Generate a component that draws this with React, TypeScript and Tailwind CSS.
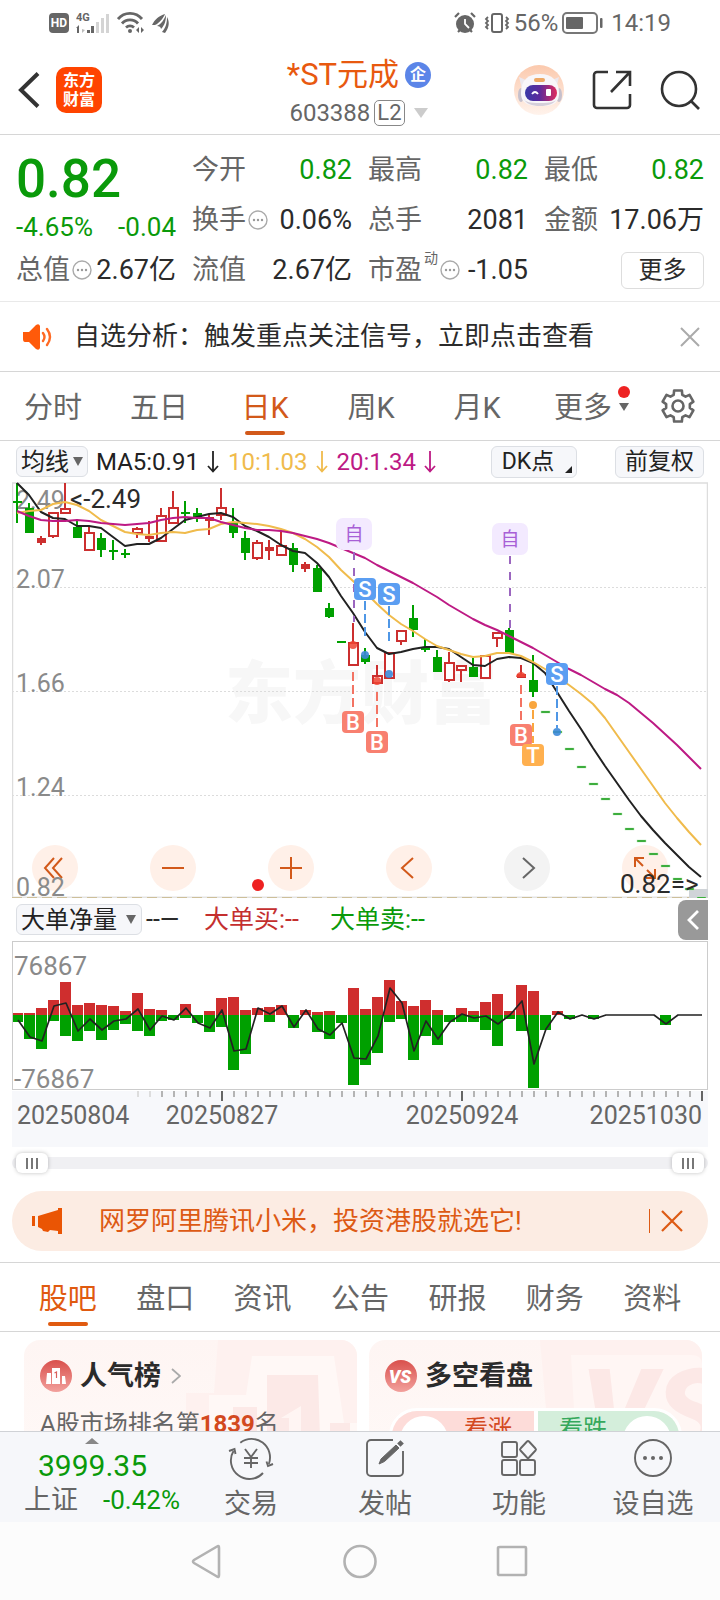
import React from "react";

type Kind = "g" | "r" | "h";
// kind, body top, body bottom, high, low
type Candle = [Kind, number, number, number, number];

const candles: Candle[] = [
  ["g", 501, 503, 483, 523], ["g", 508, 533, 503, 533], ["r", 538, 543, 536, 545], ["h", 512, 536, 512, 538],
  ["h", 508, 513, 483, 513], ["g", 527, 538, 520, 538], ["h", 532, 550, 527, 550], ["g", 538, 550, 533, 557],
  ["g", 550, 552, 540, 560], ["g", 553, 555, 549, 558], ["h", 528, 533, 527, 538], ["r", 536, 539, 521, 542],
  ["h", 515, 541, 508, 542], ["h", 507, 523, 491, 524], ["g", 512, 514, 501, 523], ["g", 513, 517, 508, 522],
  ["r", 517, 521, 515, 535], ["h", 507, 515, 488, 520], ["g", 522, 533, 508, 538], ["g", 538, 553, 531, 560],
  ["h", 542, 558, 540, 560], ["r", 547, 551, 540, 560], ["h", 545, 555, 531, 555], ["g", 548, 565, 543, 572],
  ["r", 564, 569, 562, 572], ["g", 568, 592, 565, 592], ["g", 608, 617, 603, 618], ["g", 641, 643, 642, 642],
  ["h", 642, 665, 623, 665], ["g", 655, 662, 648, 664], ["h", 675, 683, 665, 684], ["h", 652, 678, 652, 679],
  ["h", 630, 641, 630, 645], ["g", 618, 630, 605, 637], ["g", 648, 650, 639, 652], ["g", 657, 672, 650, 672],
  ["h", 662, 680, 652, 682], ["h", 665, 670, 665, 682], ["g", 667, 677, 658, 677], ["h", 655, 678, 655, 678],
  ["h", 632, 638, 632, 647], ["g", 630, 654, 628, 654], ["r", 674, 678, 665, 678], ["g", 680, 692, 655, 697],
];

const limitDown = [712, 732, 749, 767, 784, 799, 814, 829, 841, 854, 866, 879, 889, 898];

const ma5 = [
  483, 495, 512, 518, 519, 526, 526, 528, 537, 546, 544, 544, 538, 529, 520, 517, 514, 513, 517, 526, 531, 537, 545,
  551, 553, 563, 577, 596, 613, 632, 648, 654, 652, 649, 647, 647, 649, 657, 665, 666, 659, 657, 658, 663, 673, 692,
  711, 729, 748, 766, 783, 800, 816, 830, 843, 855, 867, 877,
];
const ma10 = [
  513, 511, 510, 504, 502, 505, 511, 520, 526, 532, 534, 535, 533, 532, 533, 530, 529, 524, 522, 523, 524, 526, 529,
  533, 539, 547, 557, 570, 581, 592, 604, 615, 624, 631, 639, 646, 650, 654, 657, 656, 653, 653, 656, 662, 669, 677,
  685, 694, 704, 718, 735, 752, 769, 786, 803, 818, 832, 845,
];
const ma20 = [
  511, 516, 520, 521, 521, 520, 521, 523, 524, 525, 524, 523, 520, 518, 517, 518, 518, 522, 525, 528, 530, 530, 531,
  533, 536, 539, 543, 548, 553, 558, 565, 571, 577, 583, 590, 597, 605, 612, 619, 625, 630, 636, 642, 648, 655, 662,
  669, 675, 682, 689, 695, 703, 713, 723, 734, 745, 757, 769,
];

const buys = [
  2, 2, 7, 15, 33, 10, 12, 10, 9, 4, 22, 6, 5, 0, 11, 0, 4, 17, 18, 5, 7, 8, 10, 0, 5, 3, 4, 0, 27, 6, 18, 35, 14, 9,
  15, 5, 0, 7, 4, 13, 21, 4, 30, 24, 0, 4, 0, 0, 0,
];
const sells = [
  7, 24, 34, 6, 21, 26, 16, 25, 15, 9, 16, 21, 6, 5, 3, 8, 17, 12, 55, 39, 0, 7, 0, 13, 0, 17, 24, 8, 70, 50, 38, 7, 4,
  45, 21, 30, 7, 7, 7, 15, 31, 4, 16, 73, 15, 0, 4, 0, 4, 0, 0, 0, 0, 0, 10,
];
const net = [
  1020, 1037, 1041, 1006, 1003, 1031, 1019, 1030, 1021, 1019, 1009, 1030, 1016, 1020, 1008, 1023, 1028, 1010, 1051,
  1049, 1008, 1014, 1006, 1027, 1010, 1029, 1035, 1023, 1058, 1059, 1036, 988, 1003, 1051, 1021, 1039, 1022, 1014,
  1018, 1016, 1024, 1015, 1001, 1064, 1029, 1012, 1019, 1015, 1019, 1015, 1015, 1015, 1015, 1015, 1024, 1015, 1015,
  1015,
];

const cx = (i: number) => 17 + 12 * i;
const line = (ys: number[]) => ys.map((y, i) => `${cx(i)},${y}`).join(" ");

const gearPath = (() => {
  const pts: string[] = [];
  for (let k = 0; k < 6; k++) {
    const a = k * 60 - 90;
    for (const [d, r] of [[-21, 12], [-14, 16], [14, 16], [21, 12]]) {
      const t = ((a + d) * Math.PI) / 180;
      pts.push(`${(18 + r * Math.cos(t)).toFixed(2)},${(18 + r * Math.sin(t)).toFixed(2)}`);
    }
  }
  return `M${pts.join("L")}Z`;
})();

function StatusBar() {
  return (
    <div className="flex h-[45px] shrink-0 items-center justify-between px-[49px] text-2xl text-[#666]">
      <div className="flex items-center gap-[7px]">
        <span className="flex h-5 w-5 items-center justify-center rounded bg-[#666] text-xs font-bold text-white">HD</span>
        <svg className="h-6 w-[34px]" viewBox="0 0 34 24" fill="#666">
          <text x="0" y="10" fontSize="11" fontWeight="700">4G</text>
          <path d="M0 17l3-3v8h-2v-5z" />
          <path d="M6 14v8l3-3-3-1z" fill="#bbb" />
          <rect x="11" y="19" width="3" height="3" />
          <rect x="15" y="15" width="3" height="7" />
          <g fill="#d4d4d4">
            <rect x="20" y="11" width="3" height="11" />
            <rect x="25" y="7" width="3" height="15" />
            <rect x="30" y="3" width="3" height="19" />
          </g>
        </svg>
        <svg className="h-6 w-7" viewBox="0 0 28 24" fill="none" stroke="#666" strokeWidth="2.8">
          <path d="M1 8a15.500 15.500 0 0 1 24 0M5 12.500a10.500 10.500 0 0 1 16 0M9 16.500a6 6 0 0 1 8 0" />
          <circle cx="13" cy="20" r="2" fill="#666" stroke="none" />
          <path d="M22 16v6l-3-3zM24 16v6l3-3z" fill="#666" stroke="none" />
        </svg>
        <svg className="h-5 w-[18px]" viewBox="0 0 18 20" fill="#666">
          <path d="M0 12C3 6 7 3 13 1c-1 3-5 8-8 10-1 1-3 1-5 1zM5 13c4-2 7-6 9-11 0 5-1 10-5 14 0-2-2-3-4-3zM10 19c4-5 5-9 5-15 3 5 2 11-2 16z" />
        </svg>
      </div>
      <div className="flex items-center gap-2">
        <svg className="h-[22px] w-[22px]" viewBox="0 0 22 22">
          <circle cx="11" cy="12" r="9" fill="#666" />
          <path d="M1 5l4-4M21 5l-4-4M4 20l2-2M18 20l-2-2" stroke="#666" strokeWidth="2.200" />
          <path d="M11 7v5l4 4" stroke="#fff" strokeWidth="1.800" fill="none" />
        </svg>
        <svg className="h-[22px] w-[26px]" viewBox="0 0 26 22" fill="none" stroke="#666" strokeWidth="2">
          <rect x="8" y="2" width="10" height="18" rx="2" />
          <path d="M4 5l-2 2 2 2-2 2 2 2-2 2 2 2M22 5l2 2-2 2 2 2-2 2 2 2-2 2" strokeWidth="1.800" />
        </svg>
        <span className="-ml-1">56%</span>
        <svg className="h-[22px] w-[41px] -ml-1" viewBox="0 0 41 22">
          <rect x="1" y="1" width="34" height="20" rx="4" fill="none" stroke="#777" strokeWidth="2" />
          <rect x="4" y="5" width="17" height="12" rx="1" fill="#666" />
          <rect x="38" y="6" width="2.500" height="10" rx="1" fill="#666" />
        </svg>
        <span>14:19</span>
      </div>
    </div>
  );
}

function Header() {
  return (
    <header className="grid h-[90px] shrink-0 grid-cols-[1fr_auto_1fr] items-center border-b border-[#d6d6d6] pr-5 pl-[18px]">
      <div className="flex items-center gap-4">
        <button aria-label="返回">
          <svg className="h-9 w-[22px]" viewBox="0 0 22 36" fill="none" stroke="#333" strokeWidth="4">
            <path d="M20 1.500L3 18l17 16.500" />
          </svg>
        </button>
        <a href="#home" className="flex h-[46px] w-[46px] flex-col items-center justify-center rounded-[10px] bg-[#ff4400] text-base leading-[19px] font-bold text-white">
          <span>东方</span>
          <span>财富</span>
        </a>
      </div>
      <div className="flex flex-col items-center pt-[6px]">
        <div className="flex items-center gap-[6px]">
          <h1 className="text-[31px] leading-10 text-[#e8590f]">*ST元成</h1>
          <span className="flex h-[26px] w-[26px] items-center justify-center rounded-full bg-[#5b85e8] text-base leading-none font-bold text-white">企</span>
        </div>
        <button className="flex items-center gap-1 text-2xl leading-9 text-[#666]">
          <span>603388</span>
          <span className="flex h-[26px] items-center rounded-[5px] border border-[#888] px-[2px] text-[22px]">L2</span>
          <svg className="ml-1 h-[10px] w-4" viewBox="0 0 16 10"><path d="M1 0h14L8 10z" fill="#ccc" /></svg>
        </button>
      </div>
      <div className="flex items-center justify-end gap-7">
        <button aria-label="智能助手">
          <svg className="h-[50px] w-[50px]" viewBox="0 0 50 50">
            <defs>
              <linearGradient id="peach" x1="0" y1="0" x2="0" y2="1">
                <stop offset="0" stopColor="#fbc9ad" /><stop offset="1" stopColor="#fff3ec" />
              </linearGradient>
              <linearGradient id="visor">
                <stop offset="0" stopColor="#3a3aa8" /><stop offset=".45" stopColor="#5b2a9c" /><stop offset="1" stopColor="#e02a5c" />
              </linearGradient>
            </defs>
            <circle cx="25" cy="25" r="25" fill="url(#peach)" />
            <path d="M5 12l9 4-6 8zM45 12l-9 4 6 8z" fill="#ece8ee" />
            <ellipse cx="7" cy="30" rx="3" ry="7" fill="#c6c0cc" />
            <ellipse cx="45" cy="30" rx="3" ry="7" fill="#c6c0cc" />
            <path d="M7 28C7 15 14 9 26 9s19 7 19 19-8 13-19 13S7 39 7 28z" fill="#f8f6f9" />
            <path d="M9 33c3 6 9 8 17 8s14-2 18-8c-2 4-7 5-18 5s-15-1-17-5z" fill="#d5cfda" />
            <rect x="20" y="13" width="11" height="4" rx="2" fill="#eda764" />
            <rect x="11" y="20" width="32" height="16" rx="8" fill="url(#visor)" />
            <path d="M18 29q3-4 6 0" stroke="#fff" strokeWidth="1.800" fill="none" />
            <rect x="32" y="24" width="5" height="7" rx="1" fill="#fff" />
          </svg>
        </button>
        <button aria-label="分享">
          <svg className="h-10 w-10" viewBox="0 0 40 40" fill="none" stroke="#333" strokeWidth="2.600">
            <path d="M16 2H5a3 3 0 0 0-3 3v30a3 3 0 0 0 3 3h30a3 3 0 0 0 3-3V24M24 2h14v14M38 2L19 22" />
          </svg>
        </button>
        <button aria-label="搜索">
          <svg className="h-10 w-10" viewBox="0 0 40 40" fill="none" stroke="#333" strokeWidth="2.600">
            <circle cx="19" cy="19" r="17" /><path d="M31 31l8 8" />
          </svg>
        </button>
      </div>
    </header>
  );
}

function Info() {
  return (
    <svg className="ml-[2px] h-5 w-5" viewBox="0 0 20 20">
      <circle cx="10" cy="10" r="9" fill="none" stroke="#aaa" strokeWidth="1.400" />
      <g fill="#999"><circle cx="6" cy="10" r="1.200" /><circle cx="10" cy="10" r="1.200" /><circle cx="14" cy="10" r="1.200" /></g>
    </svg>
  );
}

function Stat({ label, value, green, info, sup }: { label: string; value: string; green?: boolean; info?: boolean; sup?: string }) {
  return (
    <div className="flex h-[50px] items-center justify-between whitespace-nowrap">
      <dt className="flex items-center text-[#666]">
        {label}
        {sup && <sup className="-top-3 ml-[2px] text-sm">{sup}</sup>}
        {info && <Info />}
      </dt>
      <dd className={green ? "text-[#0a9a0a]" : "text-[#2b2b2b]"}>{value}</dd>
    </div>
  );
}

function Quote() {
  return (
    <dl className="grid shrink-0 grid-cols-4 gap-x-4 border-b border-[#e9e9e9] px-4 pt-[10px] pb-[6px] text-[27px] leading-9">
      <div className="row-span-2 flex flex-col text-[#0a9a0a]">
        <span className="pt-1 text-[53px] leading-[60px] font-medium">0.82</span>
        <span className="flex justify-between text-[26px] leading-9"><span>-4.65%</span><span>-0.04</span></span>
      </div>
      <Stat label="今开" value="0.82" green />
      <Stat label="最高" value="0.82" green />
      <Stat label="最低" value="0.82" green />
      <Stat label="换手" value="0.06%" info />
      <Stat label="总手" value="2081" />
      <Stat label="金额" value="17.06万" />
      <Stat label="总值" value="2.67亿" info />
      <Stat label="流值" value="2.67亿" />
      <Stat label="市盈" value="-1.05" info sup="动" />
      <div className="flex items-center justify-end">
        <button className="h-[37px] w-[83px] rounded-md border border-[#ddd] text-2xl leading-8 text-[#2b2b2b]">更多</button>
      </div>
    </dl>
  );
}

function Notice() {
  return (
    <div className="flex h-[70px] shrink-0 items-center border-b border-[#d6d6d6] px-5">
      <svg className="h-[26px] w-8" viewBox="0 0 32 26" fill="#ff5a0a">
        <path d="M3 8h6l7-7q3-2 4 1v22q-1 3-4 1l-7-7H5q-2 0-2-3z" />
        <path d="M23 9q3 4 0 8M27 5q6 8 0 16" fill="none" stroke="#ff6a24" strokeWidth="2.400" strokeLinecap="round" />
      </svg>
      <p className="ml-[22px] flex-1 text-[26px] whitespace-nowrap text-[#2b2b2b]">自选分析：触发重点关注信号，立即点击查看</p>
      <button aria-label="关闭">
        <svg className="h-5 w-5" viewBox="0 0 20 20" stroke="#aaa" strokeWidth="2"><path d="M1 1l18 18M19 1L1 19" /></svg>
      </button>
    </div>
  );
}

function PeriodTabs() {
  return (
    <nav className="grid h-[69px] shrink-0 grid-cols-[repeat(6,106fr)_84fr] border-b border-[#d6d6d6] text-[29px] text-[#666]">
      {["分时", "五日", "日K", "周K", "月K", "更多"].map((t) => (
        <button key={t} className={t === "日K" ? "relative pt-[6px] text-[#d2591a]" : "relative pt-[6px]"}>
          {t}
          {t === "日K" && <span className="absolute bottom-[5px] left-1/2 h-1 w-10 -translate-x-1/2 rounded-full bg-[#d2591a]" />}
          {t === "更多" && (
            <svg className="absolute top-[14px] right-[6px] h-7 w-3" viewBox="0 0 12 28">
              <circle cx="6" cy="6" r="6" fill="#ee2222" />
              <path d="M1 17h10l-5 8z" fill="#666" />
            </svg>
          )}
        </button>
      ))}
      <button aria-label="设置" className="flex items-center justify-center">
        <svg className="h-9 w-9" viewBox="0 0 36 36" fill="none" stroke="#666" strokeWidth="2.600" strokeLinejoin="round">
          <path d={gearPath} /><circle cx="18" cy="18" r="5.500" />
        </svg>
      </button>
    </nav>
  );
}

function Down() {
  return (
    <svg className="mr-[9px] ml-2 h-[22px] w-3" viewBox="0 0 12 22" fill="none" stroke="currentColor" strokeWidth="1.800">
      <path d="M6 0v20M1 15l5 5.500 5-5.500" />
    </svg>
  );
}

function Picker({ label, name, wide }: { label: string; name: string; wide?: boolean }) {
  return (
    <label className={wide ? "relative w-[126px]" : "relative w-[72px]"}>
      <select aria-label={name} className="block h-[31px] w-full appearance-none rounded-md border border-[#dcdfe4] bg-[#f6f7fa] pl-1 text-2xl leading-7 text-[#222]">
        <option>{label}</option>
      </select>
      <svg className={wide ? "absolute top-[11px] right-[6px] h-[9px] w-[10px]" : "absolute top-[11px] right-[5px] h-[9px] w-[10px]"} viewBox="0 0 10 9">
        <path d="M0 0h10L5 9z" fill="#666" />
      </svg>
    </label>
  );
}

function Indicators() {
  return (
    <div className="flex h-[41px] shrink-0 items-center px-4 text-2xl whitespace-nowrap">
      <Picker label="均线" name="主图指标" />
      <span className="ml-2 flex items-center text-[#222]">MA5:0.91<Down /></span>
      <span className="flex items-center text-[#f0bb4c]">10:1.03<Down /></span>
      <span className="flex items-center text-[#bd1a84]">20:1.34<Down /></span>
      <button className="relative ml-auto h-8 w-[86px] rounded-md border border-[#dcdfe4] bg-[#f6f7fa] pr-3 text-[23px] leading-7 text-[#222]">
        DK点
        <svg className="absolute right-1 bottom-1 h-[7px] w-[7px]" viewBox="0 0 7 7"><path d="M7 0v7H0z" fill="#222" /></svg>
      </button>
      <button className="ml-[38px] h-8 w-[89px] rounded-md border border-[#dcdfe4] bg-[#f6f7fa] text-[23px] leading-7 text-[#222]">前复权</button>
    </div>
  );
}

function Tag({ x, y, t, c }: { x: number; y: number; t: string; c: string }) {
  return (
    <g>
      <rect x={x} y={y} width="22" height="22" rx="4" fill={c} />
      <text x={x + 11} y={y + 19} fontSize="22" fontWeight="500" textAnchor="middle" fill="#fff">{t}</text>
    </g>
  );
}

function SelfMark({ x, y }: { x: number; y: number }) {
  return (
    <g>
      <rect x={x} y={y} width="36" height="32" rx="7" fill="#f3eaff" />
      <text x={x + 18} y={y + 23} fontSize="19" textAnchor="middle" fill="#a85fd6">自</text>
    </g>
  );
}

const roundButtons = [
  { name: "最早", d: "M22 13L13 23l9 10M30 13L21 23l9 10" },
  { name: "缩小", d: "M12 23h22" },
  { name: "放大", d: "M12 23h22M23 12v22" },
  { name: "左移", d: "M27 13L16 23l11 10" },
  { name: "右移", d: "M19 13l11 10-11 10", grey: true },
  { name: "全屏", d: "M13 22v-9h9M13 13l8 8M33 24v9h-9M33 33l-8-8" },
];

function PriceChart() {
  return (
    <div className="relative mx-3 shrink-0">
      <div className="absolute inset-x-0 bottom-[7px] flex justify-between pr-10 pl-5">
        {roundButtons.map((b) => (
          <button key={b.name} aria-label={b.name} className={b.grey ? "h-[46px] w-[46px] rounded-full bg-[#f3f3f3] text-[#666]" : "h-[46px] w-[46px] rounded-full bg-[#fff0e8] text-[#d2591a]"}>
            <svg className="h-full w-full" viewBox="0 0 46 46" fill="none" stroke="currentColor" strokeWidth="2"><path d={b.d} /></svg>
          </button>
        ))}
      </div>
      <svg className="pointer-events-none relative block h-auto w-full" viewBox="12 482 696 416" role="img" aria-label="日K线图">
        <text x="225" y="718" fontSize="68" fontWeight="900" fill="#f7f7f7">东方财富</text>
        <g stroke="#dcdcdc" strokeDasharray="2 2">
          <path d="M12 587.500h696M12 691.500h696M12 795.500h696" />
        </g>
        <path d="M12.500 898V483h695V898" fill="none" stroke="#ddd" strokeWidth="1.500" />
        <path d="M12 897.500h696" stroke="#e4e4e4" strokeWidth="2" />
        <path d="M12 897.500h696" stroke="#cdbf9a" strokeDasharray="10 5" />
        <g fontSize="25" fill="#8a8a8a">
          <text x="16" y="509">2.49</text>
          <text x="16" y="588">2.07</text>
          <text x="16" y="692">1.66</text>
          <text x="16" y="796">1.24</text>
          <text x="16" y="896">0.82</text>
        </g>
        {candles.map(([k, top, bottom, high, low], i) => {
          const x = cx(i);
          const c = k === "g" ? "#00a000" : "#cc2f2f";
          return (
            <g key={i}>
              <path d={`M${x} ${high}V${low}`} stroke={c} strokeWidth="2" />
              {k === "h" ? (
                <rect x={x - 4} y={top + 1} width="9" height={bottom - top - 1} fill="#fff" stroke={c} strokeWidth="2" />
              ) : (
                <rect x={x - 4} y={top} width="9" height={bottom - top} fill={c} />
              )}
            </g>
          );
        })}
        <rect x="689" y="889" width="19" height="9" fill="#d0d4d8" />
        {limitDown.map((y, i) => (
          <rect key={y} x={cx(i + 44) - 4} y={y - 1} width="9" height="2" fill="#159a15" stroke="#b9e8b9" strokeWidth=".5" />
        ))}
        <g fill="none" strokeWidth="2" strokeLinejoin="round">
          <polyline points={line(ma5)} stroke="#222" />
          <polyline points={line(ma10)} stroke="#f0bb4c" />
          <polyline points={line(ma20)} stroke="#bd1a84" />
        </g>
        <g strokeWidth="2" strokeDasharray="8 8" stroke="#9b66bf"><path d="M354 552v70M510 556v72" /></g>
        <g strokeWidth="2" strokeDasharray="9 4">
          <path d="M365 601v38M389 606v38M557 686v42" stroke="#4f97e6" />
          <path d="M353 672v38M377 692v38M521 685v38" stroke="#f37363" />
          <path d="M533 710v33" stroke="#f9a63e" />
        </g>
        <g fill="#3c88d8" fillOpacity=".9"><circle cx="365" cy="655" r="4" /><circle cx="389" cy="674" r="4" /><circle cx="557" cy="732" r="4" /></g>
        <g fill="#ee4433" fillOpacity=".85"><circle cx="353" cy="645" r="4" /><circle cx="377" cy="681" r="4" /><path d="M516 677a5 5 0 0 1 10 0z" /></g>
        <circle cx="533" cy="705" r="4" fill="#f9a63e" />
        <SelfMark x={336} y={518} />
        <SelfMark x={492} y={523} />
        <Tag x={354} y={578} t="S" c="#5b9ef2" />
        <Tag x={378} y={583} t="S" c="#5b9ef2" />
        <Tag x={546} y={663} t="S" c="#5b9ef2" />
        <Tag x={342} y={711} t="B" c="#f88070" />
        <Tag x={366} y={731} t="B" c="#f88070" />
        <Tag x={510} y={724} t="B" c="#f88070" />
        <Tag x={522} y={744} t="T" c="#ffb04f" />
        <circle cx="258" cy="885" r="6" fill="#ee2222" />
        <g fontSize="26" fill="#2b2b2b">
          <text x="70" y="508">&lt;-2.49</text>
          <text x="620" y="893">0.82=&gt;</text>
        </g>
      </svg>
    </div>
  );
}

function VolumeChart() {
  return (
    <>
      <div className="flex h-[43px] shrink-0 items-center pr-3 pl-4 text-[25px] whitespace-nowrap">
        <Picker label="大单净量" name="副图指标" wide />
        <span className="ml-1 w-[50px] text-[#2b2b2b]">--—</span>
        <span className="ml-2 w-[126px] text-[#c42f2f]">大单买:--</span>
        <span className="text-[#0a9a0a]">大单卖:--</span>
        <button aria-label="展开" className="ml-auto flex h-10 w-[30px] items-center justify-center rounded-l-lg bg-[#999]">
          <svg className="h-5 w-3" viewBox="0 0 12 20" fill="none" stroke="#fff" strokeWidth="2.800"><path d="M11 1L2 10l9 9" /></svg>
        </button>
      </div>
      <svg className="mx-3 block h-auto w-[calc(100%-24px)] shrink-0" viewBox="12 941 696 206" role="img" aria-label="大单净量图">
        <g fontSize="26" fill="#8a8a8a">
          <text x="14" y="975">76867</text>
          <text x="14" y="1088">-76867</text>
        </g>
        {buys.map((h, i) => <rect key={i} x={12 + 12 * i} y={1015 - h} width="11" height={h} fill="#cf2e2e" />)}
        {sells.map((h, i) => <rect key={i} x={12 + 12 * i} y={1015} width="11" height={h} fill="#00a000" />)}
        <polyline points={net.map((y, i) => `${18 + 12 * i},${y}`).join(" ")} fill="none" stroke="#222" strokeWidth="1.700" strokeLinejoin="round" />
        <rect x="12.500" y="941.500" width="695" height="148" fill="none" stroke="#ccc" />
        <rect x="12" y="1091" width="696" height="56" fill="#f7f8fb" />
        {Array.from({ length: 48 }, (_, i) => {
          const major = i === 7 || i === 27 || i === 47;
          return <rect key={i} x={137 + 12 * i} y="1091" width="2" height={major ? 10 : 6} fill={major ? "#666" : i < 2 ? "#ddd" : "#b4b4b4"} />;
        })}
        <g fontSize="25" fill="#666">
          <text x="17" y="1124">20250804</text>
          <text x="222" y="1124" textAnchor="middle">20250827</text>
          <text x="462" y="1124" textAnchor="middle">20250924</text>
          <text x="702" y="1124" textAnchor="end">20251030</text>
        </g>
      </svg>
    </>
  );
}

const rangeClass =
  "pointer-events-none absolute inset-x-1 top-0 h-8 w-[calc(100%-8px)] appearance-none bg-transparent [&::-webkit-slider-thumb]:pointer-events-auto [&::-webkit-slider-thumb]:h-5 [&::-webkit-slider-thumb]:w-8 [&::-webkit-slider-thumb]:appearance-none [&::-webkit-slider-thumb]:rounded-md [&::-webkit-slider-thumb]:bg-white [&::-webkit-slider-thumb]:bg-[linear-gradient(90deg,#777_2px,transparent_2px_5px,#777_5px_7px,transparent_7px_10px,#777_10px_12px)] [&::-webkit-slider-thumb]:bg-[length:12px_11px] [&::-webkit-slider-thumb]:bg-center [&::-webkit-slider-thumb]:bg-no-repeat [&::-webkit-slider-thumb]:shadow-[0_0_4px_rgba(0,0,0,0.25)]";

function RangeBar() {
  return (
    <div className="relative mx-3 flex h-8 shrink-0 items-center">
      <div className="h-3 w-full rounded-full bg-[#f0f0f3]" />
      <input type="range" aria-label="开始日期" defaultValue={0} className={rangeClass} />
      <input type="range" aria-label="结束日期" defaultValue={100} className={rangeClass} />
    </div>
  );
}

function Banner() {
  return (
    <div className="mx-3 mt-3 mb-[11px] flex h-[60px] shrink-0 items-center rounded-full bg-[#fcece3] pr-[25px] pl-5 text-[26px] text-[#dd5a14]">
      <svg className="h-[26px] w-[31px]" viewBox="0 0 31 26" fill="#ea5504">
        <path d="M0 8h3v10H0zM6 8l20-6V0h4v26h-4v-3l-8-1-2 2-5-1-1-2-4-2z" />
      </svg>
      <a href="#hk" className="ml-9 flex-1 whitespace-nowrap">网罗阿里腾讯小米，投资港股就选它!</a>
      <span className="h-6 w-px bg-[#dd5a14]" />
      <button aria-label="关闭广告" className="ml-[11px]">
        <svg className="h-[22px] w-[22px]" viewBox="0 0 22 22" stroke="#dd5a14" strokeWidth="2.200"><path d="M1 1l20 20M21 1L1 21" /></svg>
      </button>
    </div>
  );
}

function SectionTabs() {
  return (
    <nav className="grid h-[70px] shrink-0 grid-cols-7 border-y border-[#d6d6d6] px-[19px] text-[29px] text-[#666]">
      {["股吧", "盘口", "资讯", "公告", "研报", "财务", "资料"].map((t, i) => (
        <button key={t} className={i === 0 ? "relative pt-[6px] text-[#e05a10]" : "relative pt-[6px]"}>
          {t}
          {i === 0 && <span className="absolute bottom-[5px] left-1/2 h-1 w-10 -translate-x-1/2 rounded-full bg-[#e05a10]" />}
        </button>
      ))}
    </nav>
  );
}

function Cards() {
  return (
    <div className="grid grid-cols-2 gap-3 pt-2 pr-[18px] pl-6">
      <section className="relative h-40 overflow-hidden rounded-2xl bg-linear-to-b from-[#fef5f3] to-[#fffaf8] px-4 pt-5">
        <svg className="absolute top-0 right-0 h-40 w-[171px]" viewBox="162 0 171 160">
          <path d="M162 160V53h28l4-53h139v160z" fill="#fef1ef" />
          <path d="M185 160V55h37l6-39h82l10 67h13v77z" fill="#fff8f6" />
          <path d="M209 67h24v93h-24zM243 35h51l4 125h-55zM306 83h20v77h-20z" fill="#fce9e7" />
          <path d="M257 78l20-12v94h-12V78z" fill="#fff5f3" />
        </svg>
        <h2 className="relative flex items-center text-[27px] leading-8 font-bold text-[#2b2b2b]">
          <svg className="mr-2 h-8 w-8" viewBox="0 0 32 32">
            <defs>
              <linearGradient id="rank" x1="0" y1="0" x2="0" y2="1"><stop offset="0" stopColor="#d9504c" /><stop offset="1" stopColor="#f2a09c" /></linearGradient>
            </defs>
            <circle cx="16" cy="16" r="16" fill="url(#rank)" />
            <path d="M7 13h4v11H6zM12 8h8v16h-8zM22 16h3l1 8h-4z" fill="#fff" />
            <path d="M14.500 13l2-1v6" fill="none" stroke="#d9605c" strokeWidth="1.200" />
          </svg>
          人气榜
          <svg className="ml-[10px] h-4 w-[10px]" viewBox="0 0 10 16" fill="none" stroke="#aaa" strokeWidth="1.800"><path d="M1 1l8 7-8 7" /></svg>
        </h2>
        <p className="relative mt-[14px] text-2xl leading-9 whitespace-nowrap text-[#666]">
          A股市场排名第<b className="text-[#d3491f]">1839</b>名
        </p>
      </section>
      <section className="relative h-40 overflow-hidden rounded-2xl bg-linear-to-b from-[#fef5f3] to-[#fffaf8] px-4 pt-5">
        <svg className="absolute top-0 right-0 h-40 w-[162px]" viewBox="171 0 162 160">
          <path d="M171 0h162v160H185z" fill="#fef1ef" />
          <path d="M202 15h120q11 0 11 9v136H210z" fill="#fff6f4" />
          <text x="212" y="112" fontSize="116" fontWeight="900" fontStyle="italic" fill="#fce8e6">VS</text>
        </svg>
        <h2 className="relative flex items-center text-[27px] leading-8 font-bold text-[#2b2b2b]">
          <svg className="mr-2 h-8 w-8" viewBox="0 0 32 32">
            <circle cx="16" cy="16" r="16" fill="url(#rank)" />
            <text x="15" y="22.500" fontSize="18" fontWeight="900" fontStyle="italic" textAnchor="middle" fill="#fff">VS</text>
          </svg>
          多空看盘
        </h2>
        <div className="relative mx-1 mt-4 flex h-14 overflow-hidden rounded-full border-3 border-white text-2xl leading-9">
          <button className="flex flex-1 gap-4 bg-[#fddcd9] pl-2 text-[#d3491f]">
            <span className="mt-[5px] h-12 w-12 rounded-full bg-white" />看涨
          </button>
          <span className="w-1 bg-white" />
          <button className="flex flex-1 justify-end gap-4 bg-[#d4eedb] pr-2 text-[#35a85c]">
            看跌<span className="mt-[5px] h-12 w-12 rounded-full bg-white" />
          </button>
        </div>
      </section>
    </div>
  );
}

const actions = [
  {
    label: "交易",
    icon: (
      <>
        <path d="M9.300 4.700A18.500 18.500 0 0 1 37.800 26M32 35A18.500 18.500 0 0 1 2.500 13" />
        <path d="M-2 13l5.500-2 1 5M42 26l-5 2-1.500-4.500" />
        <path d="M14 11l6 8 6-8M20 19v11M13 20h14M13 25h14" />
      </>
    ),
  },
  {
    label: "发帖",
    icon: (
      <>
        <path d="M28 2H6a4 4 0 0 0-4 4v28a4 4 0 0 0 4 4h28a4 4 0 0 0 4-4V13" />
        <path d="M14 26l2-5L31 7l3 3-14.500 13.500z" fill="currentColor" strokeWidth="1" />
        <path d="M33.500 5.500l2-2 2 2-2 2z" fill="currentColor" />
      </>
    ),
  },
  {
    label: "功能",
    icon: (
      <>
        <rect x="3" y="4" width="15" height="15" rx="2" /><rect x="3" y="22" width="15" height="15" rx="2" />
        <rect x="21" y="22" width="15" height="15" rx="2" />
        <path d="M28 3.500q1-1 2 0l6.500 7q1 1 0 2l-6.500 7q-1 1-2 0l-6.500-7q-1-1 0-2z" />
      </>
    ),
  },
  {
    label: "设自选",
    icon: (
      <>
        <circle cx="20" cy="20" r="18" />
        <g fill="currentColor" stroke="none"><circle cx="12" cy="20" r="2" /><circle cx="20" cy="20" r="2" /><circle cx="28" cy="20" r="2" /></g>
      </>
    ),
  },
];

function BottomBar() {
  return (
    <footer className="grid h-[91px] shrink-0 grid-cols-[184fr_repeat(4,134fr)] border-t border-[#d0d2d6] bg-[#f6f7fa] text-[27px] text-[#666]">
      <a href="#index" className="relative flex flex-col pt-4 pl-6 whitespace-nowrap">
        <svg className="absolute top-[6px] left-[85px] h-[6px] w-[14px]" viewBox="0 0 14 6"><path d="M0 6l7-6 7 6z" fill="#888" /></svg>
        <span className="pl-[14px] text-[30px] leading-9 text-[#0a9a0a]">3999.35</span>
        <span className="flex items-center gap-[25px] leading-8">上证<span className="text-[26px] text-[#0a9a0a]">-0.42%</span></span>
      </a>
      {actions.map((a) => (
        <button key={a.label} className="flex flex-col items-center pt-[6px]">
          <svg className="h-10 w-10 overflow-visible" viewBox="0 0 40 40" fill="none" stroke="currentColor" strokeWidth="1.900">{a.icon}</svg>
          <span className="mt-2 leading-9">{a.label}</span>
        </button>
      ))}
    </footer>
  );
}

function SystemNav() {
  return (
    <div className="flex h-[78px] shrink-0 items-center justify-center gap-[119px] bg-[#fcfcfc]">
      {[
        { n: "后退", d: "M27 2.500Q29 1 29 4v27q0 3-2 1.500L4 19q-2-1.500 0-3z" },
        { n: "主页", d: "M17 2a15.500 15.500 0 1 1 0 31 15.500 15.500 0 1 1 0-31z" },
        { n: "任务", d: "M4 3h25q1 0 1 1v26q0 1-1 1H4q-2 0-2-1V4q0-1 2-1z" },
      ].map((b) => (
        <button key={b.n} aria-label={b.n}>
          <svg className="h-[35px] w-[34px]" viewBox="0 0 34 35" fill="none" stroke="#b2b2b2" strokeWidth="2.600"><path d={b.d} /></svg>
        </button>
      ))}
    </div>
  );
}

export default function App() {
  return (
    <div className="flex h-screen flex-col bg-white font-[Roboto,'Noto_Sans_CJK_SC',sans-serif]">
      <StatusBar />
      <Header />
      <main className="flex min-h-0 flex-1 flex-col overflow-y-auto [scrollbar-width:none]">
        <Quote />
        <Notice />
        <PeriodTabs />
        <Indicators />
        <PriceChart />
        <VolumeChart />
        <RangeBar />
        <Banner />
        <SectionTabs />
        <Cards />
      </main>
      <BottomBar />
      <SystemNav />
    </div>
  );
}
